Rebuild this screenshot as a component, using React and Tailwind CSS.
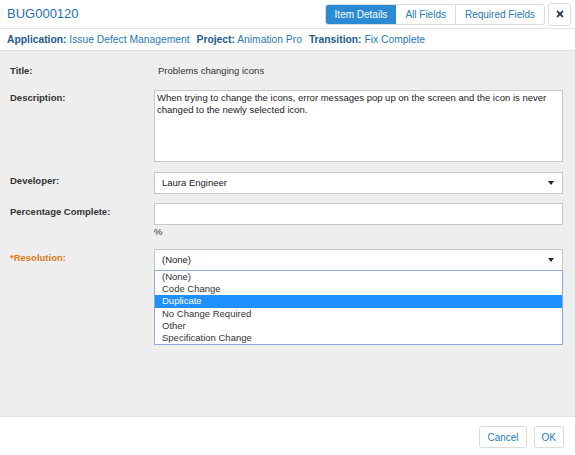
import React from 'react';
import { FaTimes } from 'react-icons/fa';

const font = { fontFamily: '"Liberation Sans", Arial, sans-serif' };

const options = ['(None)', 'Code Change', 'Duplicate', 'No Change Required', 'Other', 'Specification Change'];

const Arrow = () => (
  <svg width="6" height="4" viewBox="0 0 6 4" className="shrink-0 mr-[3px]">
    <path d="M0 0h6L3 4z" fill="#222" />
  </svg>
);

const Row = ({ label, labelClass = 'text-[#333]', labelPad = 'pt-[3px]', className = '', children }) => (
  <div className={`flex ${className}`}>
    <div className={`w-[154px] shrink-0 pl-[10px] ${labelPad} text-[9.5px] leading-[11px] font-bold ${labelClass}`}>{label}</div>
    <div className="flex-1 pr-[12px]">{children}</div>
  </div>
);

export default function App() {
  return (
    <div className="w-[575px] h-[455px] flex flex-col bg-white text-[9.5px]" style={font}>
      <div className="h-[29px] flex items-center justify-between pl-[7px] pr-[4px] border-b border-[#e5e5e5]">
        <div className="text-[13px] text-[#1f6fae]">BUG000120</div>
        <div className="flex items-center gap-[3px]">
          <div className="flex h-[21px] text-[10px] rounded-[3px] border border-[#dcdcdc] overflow-hidden">
            <div className="px-[9px] flex items-center bg-[#2a8ad4] text-white">Item Details</div>
            <div className="px-[9px] flex items-center text-[#2a7ab8] border-r border-[#dcdcdc]">All Fields</div>
            <div className="px-[9px] flex items-center text-[#2a7ab8]">Required Fields</div>
          </div>
          <div className="w-[23px] h-[23px] flex items-center justify-center rounded-[3px] border border-[#dcdcdc] text-[#1d3650]">
            <FaTimes size={10} />
          </div>
        </div>
      </div>
      <div className="h-[22px] flex items-center gap-[7px] px-[7px] text-[10.3px] text-[#2a7ab8] border-b border-[#e0e0e0]">
        <span><b className="text-[#1d5a8c]">Application:</b> Issue Defect Management</span>
        <span><b className="text-[#1d5a8c]">Project:</b> Animation Pro</span>
        <span><b className="text-[#1d5a8c]">Transition:</b> Fix Complete</span>
      </div>
      <div className="flex-1 bg-[#eeeeee] border-b border-[#e3e3e3] pt-[10px]">
        <Row label="Title:" labelPad="pt-[4px]" className="h-[29px]">
          <div className="pl-[4px] pt-[4px] leading-[11px] text-[#333]">Problems changing icons</div>
        </Row>
        <Row label="Description:" labelPad="pt-[2px]">
          <div className="h-[72px] bg-white border border-[#c8c8c8] px-[2px] pt-[1px] leading-[12px] text-[#222]">
            When trying to change the icons, error messages pop up on the screen and the icon is never changed to the newly selected icon.
          </div>
        </Row>
        <Row label="Developer:" className="mt-[10px]">
          <div className="h-[22px] bg-white border border-[#c8c8c8] flex items-center justify-between pl-[7px] pr-[5px] text-[#222]">
            <span>Laura Engineer</span>
            <Arrow />
          </div>
        </Row>
        <Row label="Percentage Complete:" className="mt-[9px]">
          <div className="h-[22px] bg-white border border-[#c8c8c8]" />
          <div className="pt-[1px] leading-[11px] text-[#333]">%</div>
        </Row>
        <Row label="*Resolution:" labelClass="text-[#e07b1a]" className="mt-[12px]">
          <div className="relative">
            <div className="h-[22px] bg-white border border-[#c8c8c8] flex items-center justify-between pl-[7px] pr-[5px] text-[#222]">
              <span>(None)</span>
              <Arrow />
            </div>
            <div className="absolute left-0 right-0 top-[21px] bg-white border border-[#8eaad8] text-[#333]">
              {options.map((o) => (
                <div
                  key={o}
                  className={`h-[12.2px] leading-[12px] pl-[7px] ${o === 'Duplicate' ? 'bg-[#1e90ff] text-white' : ''}`}
                >
                  {o}
                </div>
              ))}
            </div>
          </div>
        </Row>
      </div>
      <div className="h-[38px] flex items-center justify-end gap-[7px] pr-[11px] pt-[2px]">
        <div className="h-[22px] px-[7px] flex items-center text-[10px] text-[#2a7ab8] border border-[#dcdcdc] rounded-[3px]">Cancel</div>
        <div className="h-[22px] px-[7px] flex items-center text-[10px] text-[#2a7ab8] border border-[#dcdcdc] rounded-[3px]">OK</div>
      </div>
    </div>
  );
}
